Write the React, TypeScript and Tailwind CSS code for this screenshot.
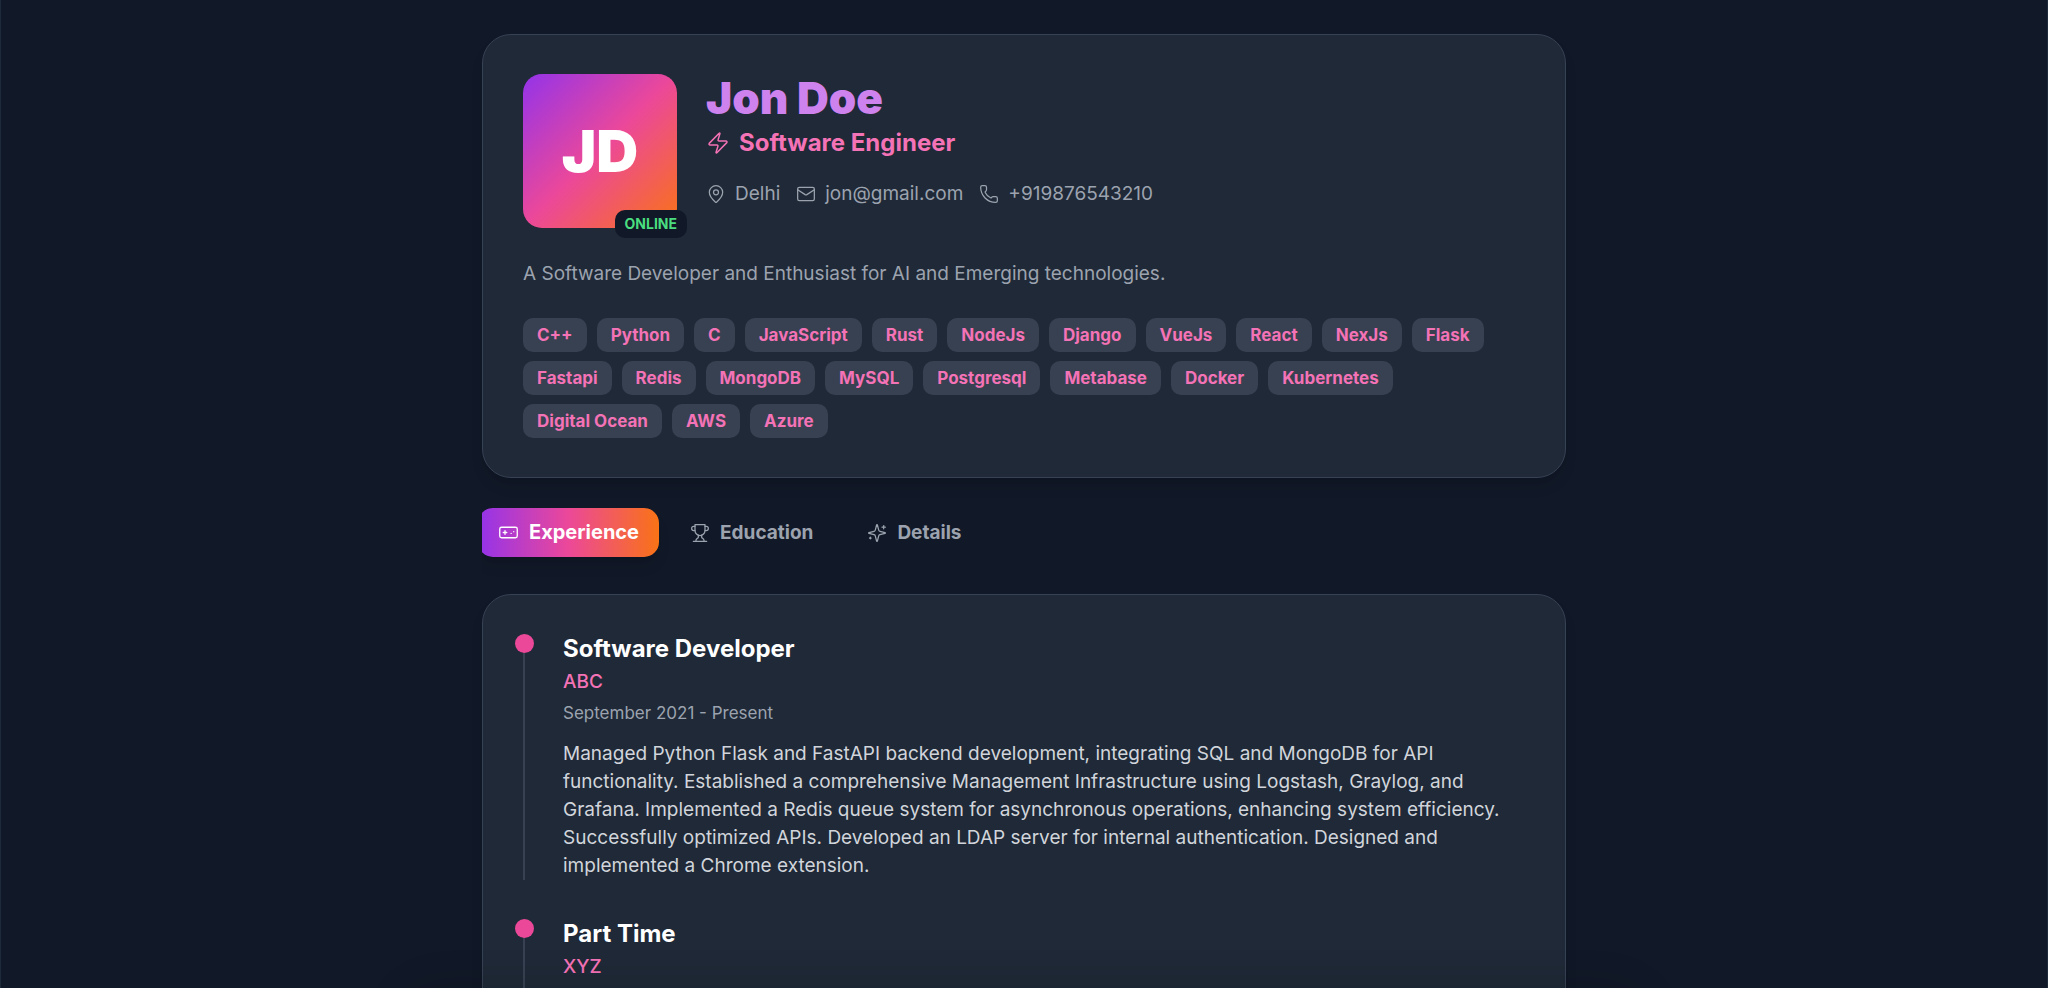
import React, { useState } from 'react';
import { Gamepad, Mail, MapPin, Phone, Zap } from 'lucide-react';

const skills = [
  'C++', 'Python', 'C', 'JavaScript', 'Rust', 'NodeJs', 'Django', 'VueJs', 'React', 'NexJs', 'Flask',
  'Fastapi', 'Redis', 'MongoDB', 'MySQL', 'Postgresql', 'Metabase', 'Docker', 'Kubernetes',
  'Digital Ocean', 'AWS', 'Azure',
];

interface Job {
  role: string;
  company: string;
  period?: string;
  summary?: string;
}

const jobs: Job[] = [
  {
    role: 'Software Developer',
    company: 'ABC',
    period: 'September 2021 - Present',
    summary:
      'Managed Python Flask and FastAPI backend development, integrating SQL and MongoDB for API functionality. Established a comprehensive Management Infrastructure using Logstash, Graylog, and Grafana. Implemented a Redis queue system for asynchronous operations, enhancing system efficiency. Successfully optimized APIs. Developed an LDAP server for internal authentication. Designed and implemented a Chrome extension.',
  },
  { role: 'Part Time', company: 'XYZ' },
];

interface IconProps {
  className?: string;
  strokeWidth?: number;
}

const Trophy: React.FC<IconProps> = ({ className, strokeWidth }) => (
  <svg className={className} viewBox="0 0 24 24" fill="none" stroke="currentColor" strokeWidth={strokeWidth} strokeLinecap="round" strokeLinejoin="round">
    <path d="M6 9H4.5a2.5 2.5 0 0 1 0-5H6" />
    <path d="M18 9h1.5a2.5 2.5 0 0 0 0-5H18" />
    <path d="M4 22h16" />
    <path d="M10 14.66V17c0 .55-.47.98-.97 1.21C7.85 18.75 7 20.24 7 22" />
    <path d="M14 14.66V17c0 .55.47.98.97 1.21C16.15 18.75 17 20.24 17 22" />
    <path d="M18 2H6v7a6 6 0 0 0 12 0V2Z" />
  </svg>
);

const Sparkles: React.FC<IconProps> = ({ className, strokeWidth }) => (
  <svg className={className} viewBox="0 0 24 24" fill="none" stroke="currentColor" strokeWidth={strokeWidth} strokeLinecap="round" strokeLinejoin="round">
    <path d="M9.937 15.5A2 2 0 0 0 8.5 14.063l-6.135-1.582a.5.5 0 0 1 0-.962L8.5 9.936A2 2 0 0 0 9.937 8.5l1.582-6.135a.5.5 0 0 1 .963 0L14.063 8.5A2 2 0 0 0 15.5 9.937l6.135 1.581a.5.5 0 0 1 0 .964L15.5 14.063a2 2 0 0 0-1.437 1.437l-1.582 6.135a.5.5 0 0 1-.963 0z" />
    <path d="M20 3v4" />
    <path d="M22 5h-4" />
    <path d="M4 17v2" />
    <path d="M5 18H3" />
  </svg>
);

const tabs = [
  { id: 'experience', label: 'Experience', icon: Gamepad },
  { id: 'education', label: 'Education', icon: Trophy },
  { id: 'details', label: 'Details', icon: Sparkles },
];

const ProfileCard: React.FC = () => (
  <section className="rounded-[29px] border border-gray-700 bg-[#1f2937] px-[40px] py-[39px] shadow-lg">
    <div className="flex items-start gap-[29px]">
      <div className="relative shrink-0">
        <div className="flex size-[154px] items-center justify-center rounded-[19px] bg-linear-to-br/srgb from-[#9333ea] via-[#ec4899] to-[#f97316] text-[58px] font-black text-white">
          JD
        </div>
        <span className="absolute -right-[10px] -bottom-[10px] rounded-[10px] bg-[#111827] px-[10px] py-1 text-[14px] leading-[20px] font-bold text-[#4ade80]">
          ONLINE
        </span>
      </div>
      <div>
        <h1 className="text-[44px] leading-[48px] font-black text-[#cd82ee]">Jon Doe</h1>
        <p className="mt-1 flex items-center gap-[9px] text-[24px] leading-[34px] font-bold text-[#f472b6]">
          <Zap className="size-6" strokeWidth={1.5} />
          Software Engineer
        </p>
        <div className="mt-[19px] flex flex-wrap gap-4 text-[19px] leading-[29px] text-[#9ca3af]">
          <span className="flex items-center gap-[9px]"><MapPin className="size-5" strokeWidth={1.5} />Delhi</span>
          <span className="flex items-center gap-[9px]"><Mail className="size-5" strokeWidth={1.5} />jon@gmail.com</span>
          <span className="flex items-center gap-[9px]"><Phone className="size-5" strokeWidth={1.5} />+919876543210</span>
        </div>
      </div>
    </div>
    <p className="mt-[31px] text-[19px] leading-[29px] text-[#9ca3af]">
      A Software Developer and Enthusiast for AI and Emerging technologies.
    </p>
    <ul className="mt-[30px] flex flex-wrap gap-x-[10px] gap-y-[9px]">
      {skills.map((skill) => (
        <li key={skill} className="rounded-[10px] bg-[#374151] px-[14px] py-[5px] text-[17px] leading-[24px] font-bold text-[#f472b6]">
          {skill}
        </li>
      ))}
    </ul>
  </section>
);

const Timeline: React.FC = () => (
  <section className="rounded-[29px] border border-gray-700 bg-[#1f2937] px-[40px] py-[39px] shadow-lg">
    <ol className="space-y-[39px]">
      {jobs.map((job) => (
        <li key={job.role} className="relative min-h-40 border-l-2 border-[#374151] pl-[38px]">
          <span className="absolute top-0 -left-[10px] size-[19px] rounded-full bg-[#ec4899]" />
          <h2 className="text-[24px] leading-[30px] font-bold text-white">{job.role}</h2>
          <p className="mt-1 text-[19px] leading-[28px] font-medium text-[#f472b6]">{job.company}</p>
          {job.period && <p className="mt-[5px] text-[17px] leading-[24px] text-[#9ca3af]">{job.period}</p>}
          {job.summary && <p className="mt-[15px] text-[19px] leading-[28px] text-[#d1d5db]">{job.summary}</p>}
        </li>
      ))}
    </ol>
  </section>
);

const App: React.FC = () => {
  const [active, setActive] = useState('experience');

  return (
    <div className="relative h-screen overflow-hidden border-x border-gray-800 bg-[#111827] px-6 pt-[34px] font-['Inter',sans-serif]">
      <main className="mx-auto max-w-[1084px]">
        <ProfileCard />
        <nav className="mt-[30px] mb-[37px] flex gap-4 overflow-x-clip">
          {tabs.map(({ id, label, icon: Icon }) => (
            <button
              key={id}
              onClick={() => setActive(id)}
              className={`flex items-center gap-[10px] rounded-[15px] py-[10px] leading-[29px] font-bold ${
                active === id
                  ? '-mx-1 bg-linear-to-r/srgb from-[#9333ea] via-[#ec4899] to-[#f97316] px-5 text-[20px] text-white shadow-lg'
                  : 'px-[19px] text-[19px] text-[#9ca3af]'
              }`}
            >
              <Icon className={active === id ? 'size-[21px]' : 'size-5'} strokeWidth={1.5} />
              {label}
            </button>
          ))}
        </nav>
        <Timeline />
      </main>
      {/* Soft shade rising from below the fold */}
      <div className="pointer-events-none absolute inset-x-[400px] top-full h-20 rounded-full shadow-[0_0_40px_rgba(0,0,0,0.15)]" />
    </div>
  );
};

export default App;
